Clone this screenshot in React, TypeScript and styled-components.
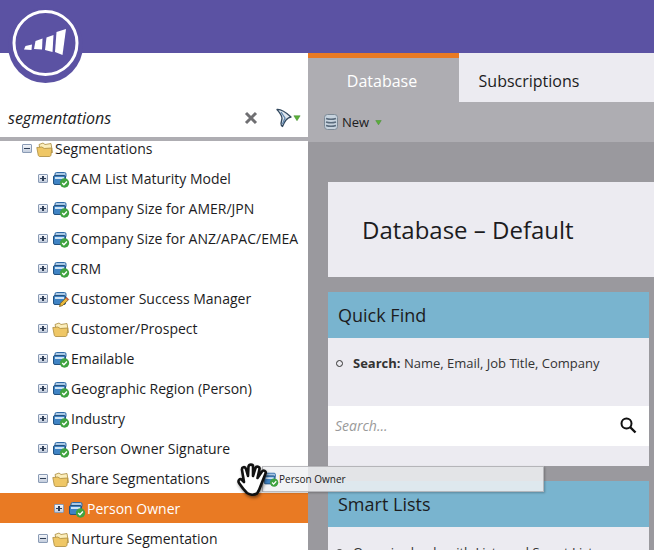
import styled, { createGlobalStyle } from "styled-components";

const GlobalStyle = createGlobalStyle`
  html, body {
    margin: 0;
    padding: 0;
    height: 550px;
    overflow: hidden;
    font-family: "Open Sans", "Liberation Sans", sans-serif;
    color: #1c1c1e;
  }
`;

const Page = styled.div`
  position: relative;
  width: 654px;
  height: 550px;
  overflow: hidden;
  display: flex;
  flex-direction: column;
`;
const Header = styled.div`
  height: 53px;
  flex: none;
  background: #5b52a3;
`;
const Main = styled.div`
  flex: 1;
  display: flex;
  min-height: 0;
`;
const Sidebar = styled.div`
  width: 308px;
  flex: none;
  background: #fff;
  overflow: hidden;
`;
const SearchRow = styled.div`
  height: 88px;
  box-sizing: border-box;
  padding: 46px 7px 0 8px;
  display: flex;
  align-items: center;
  border-bottom: 4px solid #aeadb2;
`;
const SearchText = styled.span`
  flex: 1;
  font-size: 16px;
  font-style: italic;
`;
const FilterIcons = styled.span`
  display: flex;
  align-items: center;
  margin-left: 15px;
`;
const Tree = styled.div`
  margin-top: -8px;
`;
const Row = styled.div<{ $level: number; $active?: boolean }>`
  height: 30px;
  display: flex;
  align-items: center;
  padding-left: ${(p) => 22 + p.$level * 16}px;
  font-size: 14px;
  white-space: nowrap;
  background: ${(p) => (p.$active ? "#e97a23" : "transparent")};
  color: ${(p) => (p.$active ? "#fff" : "#1c1c1e")};
`;
const ToggleBox = styled.span`
  width: 10px;
  height: 9px;
  flex: none;
  box-sizing: border-box;
  border: 1px solid #8a9bb5;
  background: linear-gradient(#f4f6fa, #c3cddd);
  border-radius: 1px;
  position: relative;
  margin: 1px 4px 0 0;
  &::before {
    content: "";
    position: absolute;
    left: 1px;
    right: 1px;
    top: 3px;
    height: 1px;
    background: #2f3f58;
  }
`;
const PlusBox = styled(ToggleBox)`
  &::after {
    content: "";
    position: absolute;
    left: 3px;
    top: 1px;
    bottom: 1px;
    width: 2px;
    background: #2f3f58;
  }
`;
const RowIcon = styled.span`
  width: 18px;
  height: 18px;
  flex: none;
  margin: 2px 1px 0 0;
  display: flex;
`;
const Content = styled.div`
  flex: 1;
  min-width: 0;
  background: #9a999e;
  display: flex;
  flex-direction: column;
`;
const Tabs = styled.div`
  display: flex;
  height: 49px;
  flex: none;
  background: #ecebf1;
`;
const Tab = styled.div<{ $active?: boolean }>`
  width: ${(p) => (p.$active ? "151px" : "140px")};
  box-sizing: border-box;
  display: flex;
  align-items: center;
  justify-content: center;
  font-size: 16px;
  padding: ${(p) => (p.$active ? "2px 3px 0 0" : "6px 0 0")};
  background: ${(p) => (p.$active ? "#aeadb2" : "transparent")};
  color: ${(p) => (p.$active ? "#fff" : "#1c1c1e")};
  border-top: ${(p) => (p.$active ? "5px solid #e97a23" : "none")};
`;
const Toolbar = styled.div`
  height: 40px;
  flex: none;
  background: #aeadb2;
  display: flex;
  align-items: center;
  padding-left: 15px;
  font-size: 13px;
  gap: 3px;
`;
const ToolbarArrow = styled.span`
  margin-left: 3px;
  display: flex;
`;
const Body = styled.div`
  padding: 40px 0 0 20px;
  display: flex;
  flex-direction: column;
`;
const TitleCard = styled.div`
  height: 95px;
  background: #ecebf1;
  display: flex;
  align-items: center;
  padding-left: 34px;
  font-size: 24px;
  margin-bottom: 15px;
`;
const Card = styled.div`
  width: 321px;
  background: #ecebf1;
  margin-bottom: 15px;
`;
const CardHeader = styled.div`
  height: 46px;
  background: #79b4cf;
  display: flex;
  align-items: center;
  padding-left: 10px;
  font-size: 18px;
`;
const BulletList = styled.ul`
  list-style: none;
  margin: 0;
  padding: 16px 0 0 25px;
  height: 68px;
  box-sizing: border-box;
  font-size: 13px;
  line-height: 18px;
  color: #333;
`;
const Bullet = styled.li`
  position: relative;
  white-space: nowrap;
  &::before {
    content: "";
    position: absolute;
    left: -17px;
    top: 6px;
    width: 7px;
    height: 7px;
    box-sizing: border-box;
    border: 1px solid #333;
    border-radius: 50%;
  }
`;
const SearchBar = styled.div`
  height: 40px;
  box-sizing: border-box;
  background: #fff;
  margin-bottom: 20px;
  display: flex;
  align-items: center;
  justify-content: space-between;
  padding: 0 12px 2px 7px;
  font-size: 14px;
  font-style: italic;
  color: #9a9a9a;
`;
const Logo = styled.svg`
  position: absolute;
  left: 0;
  top: 0;
`;
const DragProxy = styled.div`
  position: absolute;
  left: 262px;
  top: 466px;
  width: 282px;
  height: 26px;
  box-sizing: border-box;
  background: rgba(240, 241, 243, 0.85);
  border: 1px solid rgba(150, 150, 155, 0.6);
  box-shadow: 1px 1px 2px rgba(0, 0, 0, 0.25);
  display: flex;
  align-items: center;
  font-size: 10px;
  color: #222;
`;
const ProxyIcon = styled.span`
  width: 16px;
  height: 18px;
  display: flex;
`;
const Hand = styled.svg`
  position: absolute;
  left: 236px;
  top: 461px;
  filter: drop-shadow(1px 2px 1.5px rgba(0, 0, 0, 0.45));
`;

const SmartIcon = ({ badge = "check" }: { badge?: "check" | "pencil" }) => (
  <svg width="18" height="18" viewBox="0 0 18 18">
    <rect x="3" y="2.5" width="11" height="5" rx="1.5" fill="#a9c8e6" stroke="#2f6aa6" />
    <rect x="1.5" y="5.5" width="12" height="9" rx="1.5" fill="#3f83c4" stroke="#24527f" />
    <rect x="3" y="7" width="9" height="2" fill="#cfe3f5" />
    {badge === "check" ? (
      <>
        <circle cx="12.5" cy="13" r="4.7" fill="#3fa33f" />
        <path d="M10.2 13l1.7 1.7 3-3.2" fill="none" stroke="#fff" strokeWidth="1.4" />
      </>
    ) : (
      <>
        <path d="M7.5 16.5l1-3.2 6-6 2.2 2.2-6 6z" fill="#e8b83c" stroke="#7a5a18" strokeWidth="0.8" />
        <path d="M13.5 8.3l1-1 2.2 2.2-1 1z" fill="#d4574c" />
      </>
    )}
  </svg>
);

const FolderIcon = () => (
  <svg width="18" height="18" viewBox="0 0 18 18">
    <path d="M3 4.500l4-1.500 2 1.500 6-1 1.500 9H5z" fill="#fbeebc" stroke="#a98a3e" strokeWidth="0.8" />
    <path d="M0.800 7.500l5-.5 2.500 1.500 7.500-.5-.8 7c-.2 1-.8 1.500-1.800 1.500H4c-1 0-1.500-.5-1.800-1.500z" fill="#efc766" stroke="#a98a3e" strokeWidth="0.8" />
  </svg>
);

const DropArrow = ({ size = 8 }: { size?: number }) => (
  <svg width={size} height={size} viewBox="0 0 9 8">
    <path d="M1 1.500h7L4.500 7z" fill="#5cb03a" stroke="#3d8a2a" strokeWidth="0.6" />
  </svg>
);

const treeRows = [
  { label: "CAM List Maturity Model", kind: "smart" },
  { label: "Company Size for AMER/JPN", kind: "smart" },
  { label: "Company Size for ANZ/APAC/EMEA", kind: "smart" },
  { label: "CRM", kind: "smart" },
  { label: "Customer Success Manager", kind: "draft" },
  { label: "Customer/Prospect", kind: "folder" },
  { label: "Emailable", kind: "smart" },
  { label: "Geographic Region (Person)", kind: "smart" },
  { label: "Industry", kind: "smart" },
  { label: "Person Owner Signature", kind: "smart" },
];

const App = () => {
  return (
    <Page>
      <GlobalStyle />
      <Header />
      <Main>
        <Sidebar>
          <SearchRow>
            <SearchText>segmentations</SearchText>
            <svg width="14" height="14" viewBox="0 0 14 14">
              <path d="M2 2l10 10M12 2L2 12" stroke="#6f6f72" strokeWidth="3" />
            </svg>
            <FilterIcons>
              <svg width="20" height="20" viewBox="0 0 20 20">
                <path d="M4 1.500c4-.5 9 3 14 7.500-4 .5-6 3-8.500 9.500-1-.5-1.500-1.500-1.500-3l1-5C9 7 6 4 4 1.500z" fill="#dfe7ef" stroke="#33495f" strokeWidth="1.300" strokeLinejoin="round" />
                <path d="M8 4l4 6-2.500 6" fill="none" stroke="#5f86ad" strokeWidth="1.300" />
              </svg>
              <DropArrow />
            </FilterIcons>
          </SearchRow>
          <Tree>
            <Row $level={0}>
              <ToggleBox />
              <RowIcon><FolderIcon /></RowIcon>
              Segmentations
            </Row>
            {treeRows.map((row) => (
              <Row key={row.label} $level={1}>
                <PlusBox />
                <RowIcon>
                  {row.kind === "folder" ? (
                    <FolderIcon />
                  ) : (
                    <SmartIcon badge={row.kind === "draft" ? "pencil" : "check"} />
                  )}
                </RowIcon>
                {row.label}
              </Row>
            ))}
            <Row $level={1}>
              <ToggleBox />
              <RowIcon><FolderIcon /></RowIcon>
              Share Segmentations
            </Row>
            <Row $level={2} $active>
              <PlusBox />
              <RowIcon><SmartIcon /></RowIcon>
              Person Owner
            </Row>
            <Row $level={1}>
              <ToggleBox />
              <RowIcon><FolderIcon /></RowIcon>
              Nurture Segmentation
            </Row>
          </Tree>
        </Sidebar>
        <Content>
          <Tabs>
            <Tab $active>Database</Tab>
            <Tab>Subscriptions</Tab>
          </Tabs>
          <Toolbar>
            <svg width="16" height="18" viewBox="0 0 16 18">
              <rect x="1.500" y="1.500" width="13" height="15" rx="3" fill="#c7d3de" stroke="#7d8a96" />
              <path d="M3 5.500c3 1 7 1 10 0M3 9c3 1 7 1 10 0M3 12.500c3 1 7 1 10 0" fill="none" stroke="#5b6c7d" strokeWidth="1.500" />
            </svg>
            New
            <ToolbarArrow><DropArrow size={7} /></ToolbarArrow>
          </Toolbar>
          <Body>
            <TitleCard>Database – Default</TitleCard>
            <Card>
              <CardHeader>Quick Find</CardHeader>
              <BulletList>
                <Bullet><b>Search:</b> Name, Email, Job Title, Company</Bullet>
              </BulletList>
              <SearchBar>
                Search...
                <svg width="18" height="18" viewBox="0 0 18 18">
                  <circle cx="7.500" cy="7.500" r="5" fill="none" stroke="#111" strokeWidth="2" />
                  <path d="M11 11l5.500 5.500" stroke="#111" strokeWidth="2.400" />
                </svg>
              </SearchBar>
            </Card>
            <Card>
              <CardHeader>Smart Lists</CardHeader>
              <BulletList>
                <Bullet>Organize leads with Lists and Smart Lists</Bullet>
              </BulletList>
            </Card>
          </Body>
        </Content>
      </Main>
      <Logo width="90" height="90" viewBox="0 0 90 90">
        <circle cx="45.500" cy="45.500" r="37.500" fill="#5b52a3" />
        <circle cx="45.500" cy="43" r="31.500" fill="#5b52a3" stroke="#fff" strokeWidth="3" />
        <path d="M25.500 46l6.500-1.500-.5 5.500-7.500-.5z" fill="#fff" />
        <path d="M35.500 41l7-2.500-.5 11-8-.5z" fill="#fff" />
        <path d="M46.500 37.500l7-2.500-1 17-7.500-2z" fill="#fff" />
        <path d="M56.500 32l9.500-3-3.500 26-7.500-3z" fill="#fff" />
      </Logo>
      <DragProxy>
        <ProxyIcon><SmartIcon /></ProxyIcon>
        Person Owner
      </DragProxy>
      <Hand width="34" height="37" viewBox="0 0 34 37">
        <path
          d="M11 32C8 29 5 25 3 22c-1.500-3 1-5 3-3l2 2L6 9c-.5-3 3-4 4-1l2 7 .5-9.500c.5-2.500 4.500-2.500 4.500 0V15l2.500-8c1-2.500 4.500-1 4 1l-2 9 4.500-6.500c1.500-2 4.500-.5 3.500 2L25 24c-1 3-2 6-4 8.500-3 1.500-7 1.500-10-.5z"
          fill="#fff"
          stroke="#111"
          strokeWidth="2.600"
          strokeLinejoin="round"
        />
      </Hand>
    </Page>
  );
};

export default App;
